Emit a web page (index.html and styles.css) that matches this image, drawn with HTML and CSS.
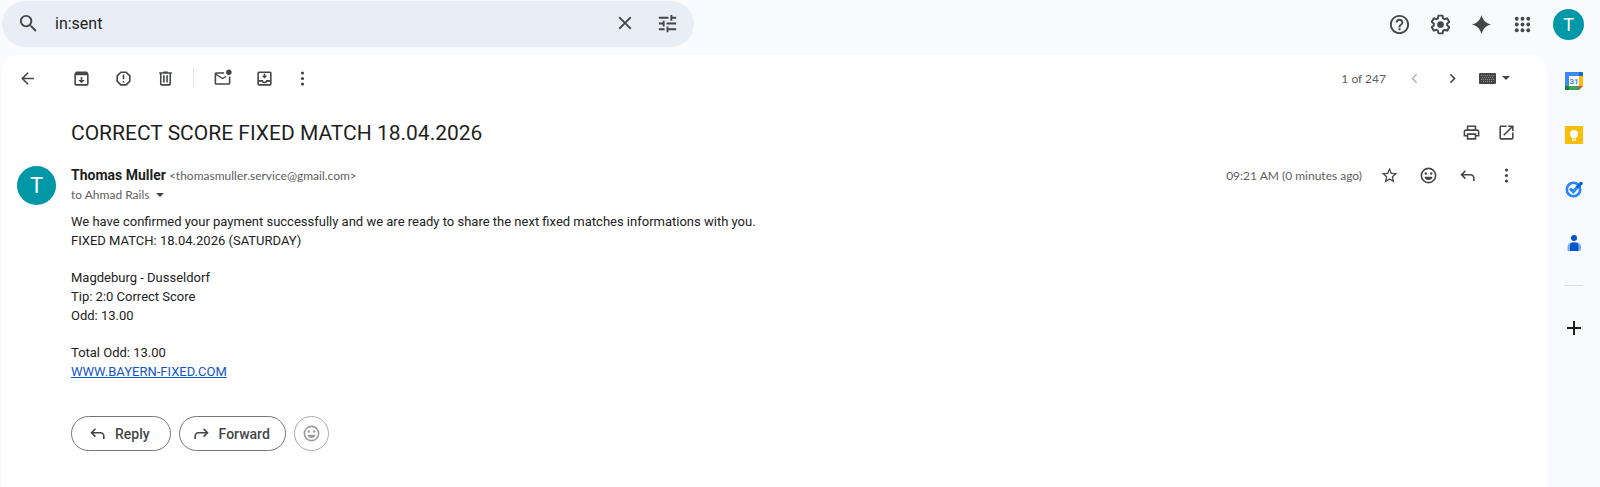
FILE: index.html
```html
<!DOCTYPE html>
<html lang="en">
<head>
<meta charset="utf-8">
<title>CORRECT SCORE FIXED MATCH 18.04.2026</title>
<link rel="stylesheet" href="styles.css">
</head>
<body>

<!-- icons used more than once -->
<svg class="defs" aria-hidden="true">
	<symbol id="i-dots" viewBox="0 0 24 24"><circle cx="12" cy="5" r="2"/><circle cx="12" cy="12" r="2"/><circle cx="12" cy="19" r="2"/></symbol>
	<symbol id="i-reply" viewBox="0 0 24 24"><path d="M8.7 5.3 10.1 6.7 6.8 10H16c2.8 0 5 2.2 5 5v4h-2v-4c0-1.700-1.300-3-3-3H6.800l3.300 3.300-1.400 1.400L3 11z"/></symbol>
	<symbol id="i-smile" viewBox="0 0 24 24"><path d="M12 2a10 10 0 1 0 0 20 10 10 0 0 0 0-20zm0 18a8 8 0 1 1 0-16 8 8 0 0 1 0 16z"/><circle cx="8.500" cy="9.500" r="1.500"/><circle cx="15.500" cy="9.500" r="1.500"/><path d="M6.900 13.500h10.200a5.200 5.200 0 0 1-10.200 0z"/></symbol>
</svg>

<header class="topbar">
	<form class="search">
		<button type="button" class="icon-btn" aria-label="Search"><svg class="i24" viewBox="0 0 24 24"><path d="M15.500 14h-.79l-.28-.27A6.471 6.471 0 0 0 16 9.500 6.500 6.500 0 1 0 9.500 16c1.610 0 3.090-.59 4.230-1.570l.27.28v.79l5 4.990L20.490 19l-4.990-5zm-6 0C7.010 14 5 11.990 5 9.500S7.010 5 9.500 5 14 7.010 14 9.500 11.990 14 9.500 14z"/></svg></button>
		<input type="text" value="in:sent" aria-label="Search mail">
		<button type="button" class="icon-btn" aria-label="Clear search"><svg class="i22" viewBox="0 0 24 24"><path d="M19 6.410 17.590 5 12 10.590 6.410 5 5 6.410 10.590 12 5 17.590 6.410 19 12 13.410 17.590 19 19 17.590 13.410 12z"/></svg></button>
		<button type="button" class="icon-btn" aria-label="Search options"><svg class="i24" viewBox="0 0 24 24"><path d="M3 17v2h6v-2H3zM3 5v2h10V5H3zm10 16v-2h8v-2h-8v-2h-2v6h2zM7 9v2H3v2h4v2h2V9H7zm14 4v-2H11v2h10zm-6-4h2V7h4V5h-4V3h-2v6z"/></svg></button>
	</form>
	<div class="top-icons">
		<button type="button" class="icon-btn" aria-label="Help"><svg class="i24" viewBox="0 0 24 24"><path d="M11 18h2v-2h-2v2zm1-16C6.480 2 2 6.480 2 12s4.480 10 10 10 10-4.480 10-10S17.520 2 12 2zm0 18c-4.410 0-8-3.590-8-8s3.590-8 8-8 8 3.590 8 8-3.590 8-8 8zm0-14c-2.210 0-4 1.790-4 4h2c0-1.100.9-2 2-2s2 .9 2 2c0 2-3 1.750-3 5h2c0-2.250 3-2.500 3-5 0-2.210-1.790-4-4-4z"/></svg></button>
		<button type="button" class="icon-btn" aria-label="Settings"><svg class="i24" viewBox="0 0 24 24"><path d="M13.850 22.250h-3.700c-.74 0-1.360-.54-1.450-1.270l-.27-1.890c-.27-.14-.53-.29-.79-.46l-1.800.72c-.7.26-1.470-.03-1.810-.65L2.200 15.530c-.35-.66-.2-1.440.36-1.880l1.530-1.190c-.01-.15-.02-.3-.02-.46 0-.15.01-.31.02-.46l-1.520-1.190c-.59-.45-.74-1.260-.37-1.880l1.850-3.190c.34-.62 1.110-.9 1.790-.63l1.810.73c.26-.17.52-.32.78-.46l.27-1.910c.09-.7.71-1.250 1.440-1.250h3.700c.74 0 1.360.54 1.450 1.270l.27 1.890c.27.14.53.29.79.46l1.800-.72c.71-.26 1.480.03 1.820.65l1.840 3.180c.36.66.2 1.440-.36 1.880l-1.520 1.190c.01.15.02.3.02.46s-.01.31-.02.46l1.520 1.190c.56.45.72 1.230.37 1.860l-1.860 3.220c-.34.62-1.110.9-1.800.63l-1.800-.72c-.26.17-.52.32-.78.46l-.27 1.910c-.1.68-.72 1.220-1.460 1.220zm-3.230-2h2.760l.37-2.550.53-.22c.44-.18.88-.44 1.340-.78l.45-.34 2.380.96 1.380-2.400-2.030-1.580.07-.56c.03-.26.06-.51.06-.78s-.03-.53-.06-.78l-.07-.56 2.030-1.580-1.390-2.400-2.390.96-.45-.35c-.42-.32-.87-.58-1.330-.77l-.52-.22-.37-2.550h-2.760l-.37 2.550-.53.21c-.44.19-.88.44-1.340.79l-.45.33-2.380-.95-1.390 2.390 2.030 1.580-.07.56a7 7 0 0 0-.06.79c0 .26.02.53.06.78l.07.56-2.030 1.580 1.380 2.400 2.390-.96.45.35c.43.33.86.58 1.330.77l.53.22.38 2.550z"/><circle cx="12" cy="12" r="3.500"/></svg></button>
		<button type="button" class="icon-btn" aria-label="Ask Gemini"><svg class="i24" viewBox="0 0 24 24"><path d="M12 2c1.500 5.500 4.500 8.500 10 10-5.500 1.500-8.500 4.500-10 10-1.500-5.500-4.500-8.500-10-10 5.500-1.500 8.500-4.500 10-10z"/></svg></button>
		<button type="button" class="icon-btn" aria-label="Google apps"><svg class="i24" viewBox="0 0 24 24"><circle cx="6" cy="6" r="2"/><circle cx="12" cy="6" r="2"/><circle cx="18" cy="6" r="2"/><circle cx="6" cy="12" r="2"/><circle cx="12" cy="12" r="2"/><circle cx="18" cy="12" r="2"/><circle cx="6" cy="18" r="2"/><circle cx="12" cy="18" r="2"/><circle cx="18" cy="18" r="2"/></svg></button>
		<button type="button" class="avatar avatar-small" aria-label="Account">T</button>
	</div>
</header>

<div class="content">
	<main class="mail">
		<div class="toolbar">
			<button type="button" class="icon-btn back" aria-label="Back"><svg viewBox="0 0 24 24"><path d="M20 11H7.830l5.590-5.590L12 4l-8 8 8 8 1.410-1.410L7.830 13H20z"/></svg></button>
			<button type="button" class="icon-btn" aria-label="Archive"><svg viewBox="0 0 24 24"><path d="m20.540 5.230-1.390-1.680C18.880 3.210 18.470 3 18 3H6c-.47 0-.88.21-1.160.55L3.460 5.230C3.170 5.570 3 6.020 3 6.500V19c0 1.100.9 2 2 2h14c1.100 0 2-.9 2-2V6.500c0-.48-.17-.93-.46-1.270zM19 19H5V8h14v11z"/><path d="M11 10h2v4h3l-4 4-4-4h3z"/></svg></button>
			<button type="button" class="icon-btn" aria-label="Report spam"><svg viewBox="0 0 24 24"><path d="M15.730 3H8.270L3 8.270v7.460L8.270 21h7.460L21 15.730V8.270L15.730 3zM19 14.900 14.900 19H9.100L5 14.900V9.100L9.100 5h5.800L19 9.100v5.800z"/><path d="M11 7h2v6h-2zM11 15h2v2h-2z"/></svg></button>
			<button type="button" class="icon-btn" aria-label="Delete"><svg viewBox="0 0 24 24"><path d="M15 4V3H9v1H4v2h1v13c0 1.100.9 2 2 2h10c1.100 0 2-.9 2-2V6h1V4h-5zm2 15H7V6h10v13z"/><path d="M9 8h2v9H9zM13 8h2v9h-2z"/></svg></button>
			<span class="divider"></span>
			<button type="button" class="icon-btn" aria-label="Mark as unread"><svg viewBox="0 0 24 24"><path d="M22 9v9c0 1.100-.9 2-2 2H4c-1.100 0-2-.9-2-2V6c0-1.100.9-2 2-2h10.100a5 5 0 0 0 0 2H4l8 5 3.700-2.300a5 5 0 0 0 1.700 1L12 13 4 8v10h16V9.900a5 5 0 0 0 2-.9z"/><circle cx="20" cy="4" r="3.500"/></svg></button>
			<button type="button" class="icon-btn" aria-label="Move to"><svg viewBox="0 0 24 24"><path d="M19 3H5a2 2 0 0 0-2 2v14c0 1.100.9 2 2 2h14a2 2 0 0 0 2-2V5a2 2 0 0 0-2-2zm0 16H5v-3h3.600a4 4 0 0 0 6.800 0H19v3zm0-5h-5a2 2 0 0 1-4 0H5V5h14v9z"/><path d="M11 6h2v2.500h2.500L12 12 8.500 8.500H11z"/></svg></button>
			<button type="button" class="icon-btn more" aria-label="More"><svg><use href="#i-dots"/></svg></button>
			<span class="count">1 of 247</span>
			<button type="button" class="icon-btn" aria-label="Newer" disabled><svg viewBox="0 0 24 24"><path d="M15.410 7.410 14 6l-6 6 6 6 1.410-1.410L10.830 12z"/></svg></button>
			<button type="button" class="icon-btn" aria-label="Older"><svg viewBox="0 0 24 24"><path d="M8.590 16.590 10 18l6-6-6-6-1.410 1.410L13.170 12z"/></svg></button>
			<button type="button" class="icon-btn input-tools" aria-label="Select input tool"><svg class="keyboard" viewBox="0 0 17 11"><rect width="17" height="11" rx="1"/><path class="keys" d="M2 2.500h13M3 4.500h12M2 6.500h13M4 8.500h9"/></svg><span class="caret"></span></button>
		</div>

		<div class="subject">
			<h1>CORRECT SCORE FIXED MATCH 18.04.2026</h1>
			<button type="button" class="icon-btn" aria-label="Print all"><svg viewBox="0 0 24 24"><path d="M19 8h-1V3H6v5H5c-1.660 0-3 1.340-3 3v6h4v4h12v-4h4v-6c0-1.660-1.340-3-3-3zM8 5h8v3H8V5zm8 14H8v-4h8v4zm4-4h-2v-2H6v2H4v-4c0-.55.45-1 1-1h14c.55 0 1 .45 1 1v4z"/></svg></button>
			<button type="button" class="icon-btn" aria-label="In new window"><svg viewBox="0 0 24 24"><path d="M19 19H5V5h7V3H5a2 2 0 0 0-2 2v14a2 2 0 0 0 2 2h14c1.100 0 2-.9 2-2v-7h-2v7zM14 3v2h3.590l-9.830 9.830 1.410 1.410L19 6.410V10h2V3h-7z"/></svg></button>
		</div>

		<article class="message">
			<div class="avatar">T</div>
			<div class="message-main">
				<div class="message-head">
					<div class="sender">
						<div class="from"><b>Thomas Muller</b> <span>&lt;thomasmuller.service@gmail.com&gt;</span></div>
						<button type="button" class="to">to Ahmad Rails <span class="caret"></span></button>
					</div>
					<div class="actions">
						<span class="time">09:21 AM (0 minutes ago)</span>
						<button type="button" class="icon-btn" aria-label="Star"><svg viewBox="0 0 24 24"><path d="m22 9.240-7.190-.62L12 2 9.190 8.630 2 9.240l5.460 4.730L5.820 21 12 17.270 18.180 21l-1.630-7.030L22 9.240zM12 15.400l-3.760 2.270 1-4.280-3.320-2.880 4.380-.38L12 6.100l1.710 4.040 4.380.38-3.320 2.880 1 4.280L12 15.400z"/></svg></button>
						<button type="button" class="icon-btn" aria-label="Add reaction"><svg><use href="#i-smile"/></svg></button>
						<button type="button" class="icon-btn" aria-label="Reply"><svg><use href="#i-reply"/></svg></button>
						<button type="button" class="icon-btn" aria-label="More"><svg><use href="#i-dots"/></svg></button>
					</div>
				</div>
				<div class="message-body">
					<p>We have confirmed your payment successfully and we are ready to share the next fixed matches informations with you.<br>
					FIXED MATCH: 18.04.2026 (SATURDAY)</p>
					<p>Magdeburg - Dusseldorf<br>
					Tip: 2:0 Correct Score<br>
					Odd: 13.00</p>
					<p>Total Odd: 13.00<br>
					<a href="#">WWW.BAYERN-FIXED.COM</a></p>
				</div>
				<div class="reply-bar">
					<button type="button" class="pill"><svg><use href="#i-reply"/></svg>Reply</button>
					<button type="button" class="pill forward"><svg class="flip"><use href="#i-reply"/></svg>Forward</button>
					<button type="button" class="pill round" aria-label="Add reaction"><svg><use href="#i-smile"/></svg></button>
				</div>
			</div>
		</article>
	</main>

	<aside class="side">
		<a href="#" aria-label="Calendar"><svg viewBox="0 0 20 20"><path fill="#4285f4" d="M1.500 1H15v4H5v10H1V1.500z"/><path fill="#1967d2" d="M15 1h3.500l.5.500V5h-4z"/><path fill="#fbbc04" d="M15 5h4v10h-4z"/><path fill="#34a853" d="M5 15h10v4H5z"/><path fill="#188038" d="M1 15h4v4H1.500L1 18.500z"/><path fill="#ea4335" d="M15 15h4l-4 4z"/><path fill="#fff" d="M5 5h10v10H5z"/><text x="10" y="13" class="day">31</text></svg></a>
		<a href="#" aria-label="Keep"><svg viewBox="0 0 20 20"><rect x="1" y="1" width="18" height="18" rx="1" fill="#fbbc04"/><circle cx="10" cy="9" r="4" fill="#fff"/><path fill="#fff" d="M8 11h4v2.500H8zM8 14.500h4V16H8z"/></svg></a>
		<a href="#" aria-label="Tasks"><svg viewBox="0 0 20 20"><circle cx="9.500" cy="10.500" r="6.700" fill="none" stroke="#2684fc" stroke-width="2.600"/><path fill="none" stroke="#2684fc" stroke-width="3" d="m6 9.500 3.300 3.200 5.200-6"/><path fill="none" stroke="#0066da" stroke-width="3" d="m13 8.500 4-4"/><circle cx="17" cy="4.500" r="1.800" fill="#0066da"/></svg></a>
		<a href="#" aria-label="Contacts"><svg viewBox="0 0 20 20"><circle cx="10" cy="5" r="3" fill="#0057cc"/><path fill="#7baaf7" d="M3.500 18v-4A4.500 4.500 0 0 1 8 9.500h4.500A4.500 4.500 0 0 1 17 14v1.500a2.500 2.500 0 0 1-2.500 2.500z"/><path fill="#0057cc" d="M6 18v-5.500A3 3 0 0 1 9 9.500h3a3 3 0 0 1 2.500 3V18z"/></svg></a>
		<hr>
		<a href="#" aria-label="Get add-ons"><svg viewBox="0 0 20 20"><path d="M9 3h2v6h6v2h-6v6H9v-6H3V9h6z"/></svg></a>
	</aside>
</div>

</body>
</html>
```

FILE: styles.css
```css
* {
	box-sizing: border-box;
}
body {
	margin: 0;
	min-height: 100vh;
	display: flex;
	flex-direction: column;
	background-color: #f8fafd;
	color: #1f1f1f;
	font-family: Roboto, Arial, sans-serif;
	font-size: 12px;
}
button {
	padding: 0;
	border: 0;
	background: none;
	color: inherit;
	font: inherit;
	cursor: pointer;
}
svg {
	width: 19px;
	height: 19px;
	fill: currentColor;
}
.defs {
	position: absolute;
	width: 0;
	height: 0;
}
.i24 {
	width: 23px;
	height: 23px;
}
.i22 {
	width: 22px;
	height: 22px;
}
.icon-btn {
	display: flex;
	align-items: center;
	justify-content: center;
	flex: none;
	width: 39px;
	height: 36px;
	color: #444746;
}
.icon-btn:disabled {
	color: #b4b6b8;
}
.caret {
	display: inline-block;
	border: 4px solid transparent;
	border-top-color: #444746;
	border-bottom: 0;
}

/* top bar */
.topbar {
	display: flex;
	align-items: center;
	justify-content: space-between;
	padding: 1px 16px 8px 2px;
}
.search {
	display: flex;
	align-items: center;
	width: 44%;
	max-width: 692px;
	height: 46px;
	padding: 0 6px 2px 5px;
	border-radius: 23px;
	background-color: #e9eef6;
}
.search .icon-btn {
	width: 42px;
}
.search input {
	flex: 1;
	min-width: 0;
	padding: 0 6px;
	border: 0;
	outline: 0;
	background: none;
	color: #1f1f1f;
	font: inherit;
	font-size: 16px;
}
.top-icons {
	display: flex;
	align-items: center;
}
.top-icons .icon-btn {
	width: 41px;
}
.avatar {
	display: flex;
	align-items: center;
	justify-content: center;
	flex: none;
	width: 39px;
	height: 39px;
	border-radius: 50%;
	background-color: #0097a7;
	color: #fff;
	font-size: 22px;
}
.avatar-small {
	width: 31px;
	height: 31px;
	margin-left: 10px;
	font-size: 18px;
}

/* card with the opened mail, app strip on its right */
.content {
	flex: 1;
	display: flex;
}
.mail {
	flex: 1;
	min-width: 0;
	margin-left: 2px;
	padding: 0 21px 34px 15px;
	border-radius: 16px 16px 0 0;
	background-color: #fff;
}
.toolbar {
	display: flex;
	align-items: center;
	height: 46px;
	margin-left: -11px;
}
.toolbar .icon-btn {
	width: 42px;
}
.toolbar .back {
	margin-right: 12px;
}
.toolbar .more {
	width: 34px;
}
.divider {
	width: 1px;
	height: 20px;
	margin: 0 7px;
	background-color: #e1e3e6;
}
.count,
.from span,
.to,
.time {
	color: #5e5e5e;
	font-family: Lato, Arial, sans-serif;
}
.count {
	margin-left: auto;
	padding-right: 9px;
}
.count ~ .icon-btn {
	width: 38px;
}
.toolbar .input-tools {
	width: 55px;
	padding-right: 8px;
	gap: 6px;
}
.keyboard {
	width: 17px;
	height: 11px;
}
.keys {
	stroke: #8a8d8c;
	stroke-dasharray: 1 1;
}

.subject {
	display: flex;
	align-items: center;
	height: 63px;
	padding: 0 2px 0 54px;
}
.subject h1 {
	flex: 1;
	margin: 0;
	font-size: 21px;
	font-weight: 400;
}
.subject .icon-btn {
	width: 35px;
}

.message {
	display: flex;
	gap: 15px;
}
.message > .avatar {
	margin-top: 2px;
}
.message-main {
	flex: 1;
	min-width: 0;
}
.message-head {
	display: flex;
	justify-content: space-between;
	height: 48px;
}
.from,
.to {
	display: block;
	height: 19px;
	line-height: 19px;
}
.from {
	margin-top: 2px;
}
.from b {
	font-size: 14px;
}
.to .caret {
	margin: 0 0 2px 3px;
}
.actions {
	display: flex;
	align-items: center;
	height: 23px;
}
.time {
	padding-right: 8px;
}
.message-body {
	color: #222;
	font-size: 13px;
	line-height: 19px;
}
.message-body p {
	margin: 0 0 18px;
}
.message-body a {
	color: #1155cc;
}
.reply-bar {
	display: flex;
	gap: 8px;
	margin-top: 35px;
}
.pill {
	display: flex;
	align-items: center;
	gap: 8px;
	height: 35px;
	padding: 0 20px 0 16px;
	border: 1px solid #747775;
	border-radius: 18px;
	color: #444746;
	font-size: 14px;
	font-weight: 500;
}
.pill.forward {
	padding: 0 15px 0 12px;
}
.pill.round {
	justify-content: center;
	width: 35px;
	padding: 0;
	border-color: #aaacab;
	color: #9a9c9b;
}
.flip {
	transform: scaleX(-1);
}

/* app strip */
.side {
	display: flex;
	flex-direction: column;
	align-items: center;
	gap: 34px;
	width: 53px;
	padding-top: 16px;
}
.side a {
	height: 20px;
	color: #1f1f1f;
}
.side svg {
	width: 20px;
	height: 20px;
}
.side hr {
	width: 19px;
	margin: -2px 0;
	border: 0;
	border-top: 1px solid #dadce0;
}
.day {
	fill: #4285f4;
	font-size: 8px;
	font-weight: 700;
	text-anchor: middle;
}
```
